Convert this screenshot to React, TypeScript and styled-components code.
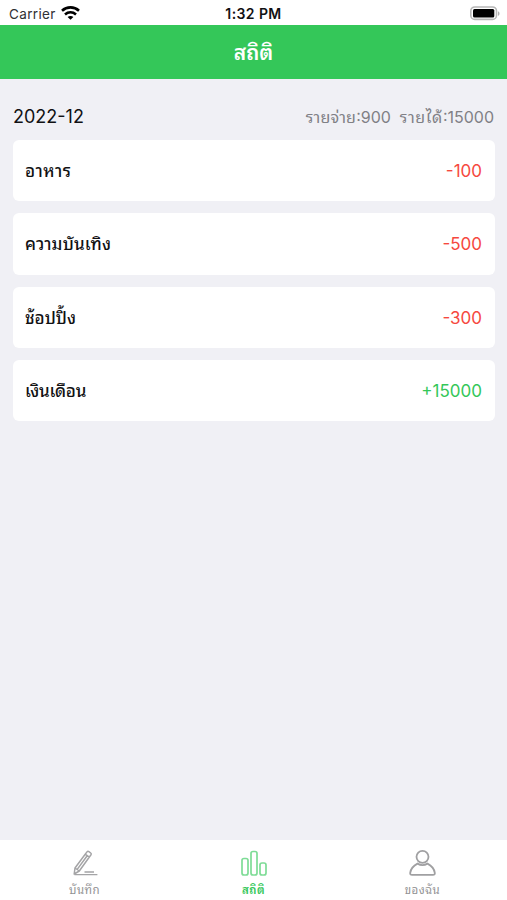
import React from "react";
import styled, { createGlobalStyle } from "styled-components";

const GlobalStyle = createGlobalStyle`
  * { box-sizing: border-box; }
  body { margin: 0; background: #f0f0f5; }
`;

const Screen = styled.div`
  width: 507px;
  height: 900px;
  display: flex;
  flex-direction: column;
  overflow: hidden;
  background: #f0f0f5;
  color: #111113;
  font-family: Inter, Thonburi, "Noto Sans Thai Looped", Loma, Waree, Garuda, "Noto Serif Thai", sans-serif;
`;

const StatusBar = styled.div`
  height: 25px;
  flex: none;
  display: grid;
  grid-template-columns: 1fr auto 1fr;
  align-items: center;
  padding: 2px 7px 0 9px;
  background: #fff;
  font-size: 13.5px;
`;

const Carrier = styled.div`
  display: flex;
  align-items: center;
  gap: 5px;
  letter-spacing: 0.35px;
  color: #303033;
`;

const Clock = styled.div`
  font-weight: 600;
  font-size: 14px;
  letter-spacing: 0.4px;
  margin-right: 2px;
`;

const BatterySlot = styled.div`
  display: flex;
  justify-content: flex-end;
`;

const Header = styled.header`
  height: 54px;
  flex: none;
  display: flex;
  align-items: center;
  justify-content: center;
  padding-bottom: 4px;
  background: #34c759;
  color: #fff;
  font-size: 21px;
  font-weight: 600;
`;

const Content = styled.main`
  flex: 1;
  padding: 23px 12px 0 13px;
`;

const Summary = styled.div`
  height: 29px;
  margin-bottom: 9px;
  display: flex;
  justify-content: space-between;
  align-items: center;
  white-space: nowrap;
`;

const Month = styled.div`
  font-size: 18px;
`;

const Totals = styled.div`
  display: flex;
  gap: 9px;
  padding: 0 1px 1px 0;
  font-size: 16px;
  color: #808085;
`;

const ThaiLabel = styled.span<{ $spacing: number }>`
  letter-spacing: ${(p) => p.$spacing}px;
`;

const List = styled.div`
  display: flex;
  flex-direction: column;
  gap: 12px;
`;

const Row = styled.div`
  height: 61.3px;
  display: flex;
  justify-content: space-between;
  align-items: center;
  padding: 0 13px 0 12px;
  border-radius: 6px;
  background: #fff;
`;

const Category = styled.div<{ $spacing: number }>`
  padding-bottom: 2px;
  font-size: 17px;
  font-weight: 500;
  letter-spacing: ${(p) => p.$spacing}px;
`;

const Amount = styled.div<{ $income: boolean }>`
  padding-top: 1px;
  font-size: 17px;
  color: ${(p) => (p.$income ? "#34c759" : "#f6483e")};
`;

const TabBar = styled.nav`
  height: 60px;
  flex: none;
  display: grid;
  grid-template-columns: repeat(3, 1fr);
  background: #fff;
`;

const Tab = styled.div<{ $active?: boolean }>`
  display: flex;
  flex-direction: column;
  align-items: center;
  padding-top: 8px;
  color: ${(p) => (p.$active ? "#34c759" : "#929294")};
  font-size: 11.5px;
  line-height: 16px;
  letter-spacing: 0.4px;
  font-weight: ${(p) => (p.$active ? 600 : 400)};
  svg { margin-bottom: 4px; }
`;

const Wifi = () => (
  <svg width="19" height="15" viewBox="0 0 19 15" fill="none" stroke="#000" strokeWidth="2.6">
    <path d="M1 4.7C5.8.3 13.2.3 18 4.7" />
    <path d="M4 8.4c3.2-2.8 7.8-2.8 11 0" />
    <path d="M6.6 11 9.5 13.8l2.9-2.8c-1.6-1.4-4.2-1.4-5.8 0Z" fill="#000" stroke="none" />
  </svg>
);

const Battery = () => (
  <svg width="31" height="15" viewBox="0 0 31 15">
    <rect x="1.8" y="1" width="25.7" height="12.4" rx="4" fill="#fff" stroke="#b6b6b6" strokeWidth="1.6" />
    <rect x="4" y="3" width="21.3" height="8.6" rx="1.5" fill="#000" />
    <path d="M29 5.2c2 .8 2 3.8 0 4.6Z" fill="#b0b0b0" />
  </svg>
);

const Pencil = () => (
  <svg width="26" height="30" viewBox="0 0 26 30" fill="none" stroke="#a4a4a6" strokeWidth="1.5" strokeLinejoin="round">
    <path d="M13.2 6.2 15 3.9q.8-1 1.9-.3l1.8 1.4q1 .8.3 1.8l-1.8 2.4L7.3 23 2.2 26 3 20ZM13.2 6.2l4 3M3 20l4.3 3M15.2 7.7 5.2 21.4" />
    <path d="M2.4 26.6h23M12.5 24h9.5" strokeWidth="1.3" />
  </svg>
);

const Bars = () => (
  <svg width="26" height="30" viewBox="0 0 26 30" fill="none" stroke="#7edc96" strokeWidth="1.7">
    <rect x="1" y="10.5" width="6" height="16.5" rx="2" />
    <rect x="10" y="3.5" width="6" height="23.5" rx="2" />
    <rect x="19" y="15" width="6" height="12" rx="2" />
  </svg>
);

const Person = () => (
  <svg width="28" height="30" viewBox="0 0 28 30" fill="none" stroke="#a0a0a2" strokeWidth="1.8">
    <circle cx="13.5" cy="8.8" r="6" />
    <path d="M8.5 15.6C4.3 17.7 1.8 20.8 1.2 24.8q-.3 2.1 1.9 2.1h20.8q2.2 0 1.9-2.1c-.6-4-3.1-7.1-7.3-9.2-3.1 1.8-6.9 1.8-10 0Z" />
  </svg>
);

const entries = [
  { name: "อาหาร", value: -100, spacing: 0.5 },
  { name: "ความบันเทิง", value: -500, spacing: 0.15 },
  { name: "ช้อปปิ้ง", value: -300, spacing: 0 },
  { name: "เงินเดือน", value: 15000, spacing: -0.25 },
];

export default function App() {
  return (
    <Screen>
      <GlobalStyle />
      <StatusBar>
        <Carrier>Carrier <Wifi /></Carrier>
        <Clock>1:32 PM</Clock>
        <BatterySlot><Battery /></BatterySlot>
      </StatusBar>
      <Header>สถิติ</Header>
      <Content>
        <Summary>
          <Month>2022-12</Month>
          <Totals>
            <span><ThaiLabel $spacing={0.2}>รายจ่าย</ThaiLabel>:900</span>
            <span><ThaiLabel $spacing={0.6}>รายได้</ThaiLabel>:15000</span>
          </Totals>
        </Summary>
        <List>
          {entries.map((e) => (
            <Row key={e.name}>
              <Category $spacing={e.spacing}>{e.name}</Category>
              <Amount $income={e.value > 0}>{e.value > 0 ? `+${e.value}` : e.value}</Amount>
            </Row>
          ))}
        </List>
      </Content>
      <TabBar>
        <Tab><Pencil />บันทึก</Tab>
        <Tab $active><Bars />สถิติ</Tab>
        <Tab><Person />ของฉัน</Tab>
      </TabBar>
    </Screen>
  );
}
